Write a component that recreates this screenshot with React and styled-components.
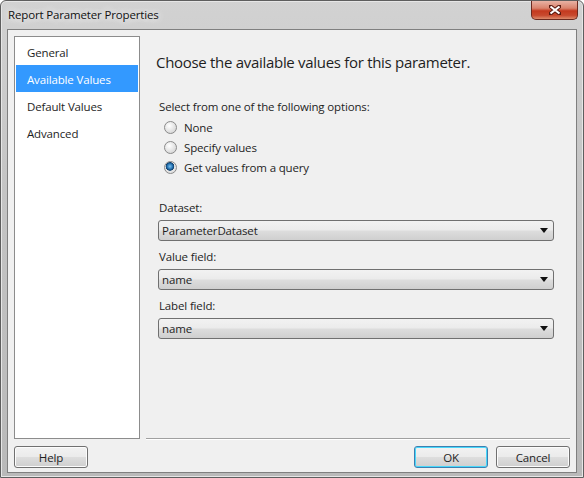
import React from "react"
import styled, { createGlobalStyle } from "styled-components"

const GlobalStyle = createGlobalStyle`
  body {
    margin: 0;
    background: #ffffff;
    font-family: "Open Sans", "Noto Sans", "Liberation Sans", sans-serif;
  }
`

const navItems = ["General", "Available Values", "Default Values", "Advanced"]

const options = [
  { label: "None", checked: false },
  { label: "Specify values", checked: false },
  { label: "Get values from a query", checked: true },
]

const fields = [
  { label: "Dataset:", value: "ParameterDataset" },
  { label: "Value field:", value: "name" },
  { label: "Label field:", value: "name" },
]

const Arrow = () => (
  <svg width="8" height="5" viewBox="0 0 8 5">
    <path d="M0 0 L8 0 L4 5 Z" fill="#111" />
  </svg>
)

const App = () => {
  return (
    <>
      <GlobalStyle />
      <Window>
        <TitleBar>
          <Title>Report Parameter Properties</Title>
          <CloseButton>
            <svg width="12" height="10" viewBox="0 0 12 10">
              <path
                d="M1 1 L11 9 M11 1 L1 9"
                stroke="#5a1a10"
                strokeWidth="4"
                strokeLinecap="square"
              />
              <path
                d="M1.5 1.5 L10.5 8.5 M10.5 1.5 L1.5 8.5"
                stroke="#fff"
                strokeWidth="2.2"
              />
            </svg>
          </CloseButton>
        </TitleBar>
        <Client>
          <Body>
            <Nav>
              {navItems.map((item) => (
                <NavItem key={item} selected={item === "Available Values"}>
                  {item}
                </NavItem>
              ))}
            </Nav>
            <Panel>
              <Heading>Choose the available values for this parameter.</Heading>
              <Form>
                <Prompt>Select from one of the following options:</Prompt>
                <RadioList>
                  {options.map((o) => (
                    <RadioRow key={o.label}>
                      <Radio checked={o.checked} />
                      <span>{o.label}</span>
                    </RadioRow>
                  ))}
                </RadioList>
                <Fields>
                  {fields.map((f) => (
                    <Field key={f.label}>
                      <FieldLabel>{f.label}</FieldLabel>
                      <Select>
                        <span>{f.value}</span>
                        <Arrow />
                      </Select>
                    </Field>
                  ))}
                </Fields>
              </Form>
            </Panel>
          </Body>
          <Footer>
            <Button>Help</Button>
            <ButtonGroup>
              <Button primary>OK</Button>
              <Button>Cancel</Button>
            </ButtonGroup>
          </Footer>
        </Client>
      </Window>
    </>
  )
}

const Window = styled.div`
  width: 584px;
  height: 478px;
  box-sizing: border-box;
  display: flex;
  flex-direction: column;
  padding: 0 6px 4px 6px;
  border: 1px solid #5e5e5e;
  border-radius: 6px 6px 0 0;
  background: linear-gradient(180deg, #d2d2d2 0%, #c4c4c4 40%, #b9b9b9 100%);
  box-shadow: inset 0 0 0 1px #e6e6e6;
`

const TitleBar = styled.div`
  height: 28px;
  display: flex;
  align-items: flex-start;
  justify-content: space-between;
`

const Title = styled.div`
  margin-top: 6px;
  padding-left: 1px;
  font-size: 11.5px;
  letter-spacing: -0.15px;
  color: #111;
  text-shadow: 0 0 6px #f4f4f4, 0 0 10px #eeeeee;
`

const CloseButton = styled.div`
  width: 45px;
  height: 18px;
  margin-right: -1px;
  display: flex;
  align-items: center;
  justify-content: center;
  border: 1px solid #6b2a20;
  border-top: none;
  border-radius: 0 0 5px 5px;
  background: linear-gradient(
    180deg,
    #e8b2a4 0%,
    #d9826c 40%,
    #c4391f 55%,
    #c84a2f 80%,
    #dd8b6c 100%
  );
`

const Client = styled.div`
  flex: 1;
  display: flex;
  flex-direction: column;
  background: #f0f0f0;
  border: 1px solid #7f7f7f;
  font-size: 11.5px;
  letter-spacing: -0.15px;
  color: #1e1e1e;
`

const Body = styled.div`
  flex: 1;
  display: flex;
  gap: 6px;
  padding: 6px 6px 0 6px;
`

const Nav = styled.div`
  width: 122px;
  display: flex;
  flex-direction: column;
  padding: 1px;
  background: #fff;
  border: 1px solid #8c8c8c;
`

const NavItem = styled.div`
  height: 27px;
  display: flex;
  align-items: center;
  padding-left: 11px;
  padding-top: 1px;
  box-sizing: border-box;
  background: ${(p) => (p.selected ? "#3399ff" : "transparent")};
  color: ${(p) => (p.selected ? "#fff" : "#1e1e1e")};
`

const Panel = styled.div`
  flex: 1;
  display: flex;
  flex-direction: column;
  padding-left: 10px;
  border-bottom: 1px solid #a0a0a0;
  box-shadow: 0 1px 0 #ffffff;
`

const Heading = styled.div`
  margin-top: 16px;
  font-size: 15px;
  letter-spacing: -0.3px;
  line-height: 20px;
  color: #1e1e1e;
`

const Form = styled.div`
  display: flex;
  flex-direction: column;
  padding-left: 3px;
  padding-right: 16px;
`

const Prompt = styled.div`
  margin-top: 27px;
  line-height: 16px;
`

const RadioList = styled.div`
  margin-top: 2px;
  padding-left: 5px;
  display: flex;
  flex-direction: column;
`

const RadioRow = styled.div`
  height: 20px;
  display: flex;
  align-items: center;
  gap: 7px;
`

const Radio = styled.span`
  width: 11px;
  height: 11px;
  border-radius: 50%;
  border: 1px solid #8a8a8a;
  background: ${(p) =>
    p.checked
      ? "radial-gradient(circle at 45% 40%, #7fc3ee 0, #2a78b8 2.5px, #10406c 4px, #e6e6e6 4.6px, #dadada 100%)"
      : "radial-gradient(circle at 40% 35%, #ffffff 0, #eaeaea 40%, #cdcdcd 100%)"};
`

const Fields = styled.div`
  margin-top: 22px;
  display: flex;
  flex-direction: column;
  gap: 7px;
`

const Field = styled.div`
  display: flex;
  flex-direction: column;
  gap: 4px;
`

const FieldLabel = styled.div`
  line-height: 17px;
`

const Select = styled.div`
  height: 21px;
  box-sizing: border-box;
  margin-left: -1px;
  display: flex;
  align-items: center;
  justify-content: space-between;
  padding: 0 5px 0 3px;
  border: 1px solid #707070;
  border-radius: 3px;
  background: linear-gradient(
    180deg,
    #f2f2f2 0%,
    #ebebeb 48%,
    #dddddd 52%,
    #cfcfcf 100%
  );
`

const Footer = styled.div`
  display: flex;
  justify-content: space-between;
  padding: 7px 6px 4px 6px;
`

const ButtonGroup = styled.div`
  display: flex;
  gap: 8px;
`

const Button = styled.div`
  width: 74px;
  height: 22px;
  box-sizing: border-box;
  display: flex;
  align-items: center;
  justify-content: center;
  border: 1px solid ${(p) => (p.primary ? "#3c7fb1" : "#707070")};
  border-radius: 3px;
  background: linear-gradient(
    180deg,
    #f2f2f2 0%,
    #ebebeb 48%,
    #dddddd 52%,
    #cfcfcf 100%
  );
  box-shadow: ${(p) =>
    p.primary ? "inset 0 0 0 1px #48d8fb" : "inset 0 0 0 1px #fcfcfc"};
  color: #1e1e1e;
`

export default App
